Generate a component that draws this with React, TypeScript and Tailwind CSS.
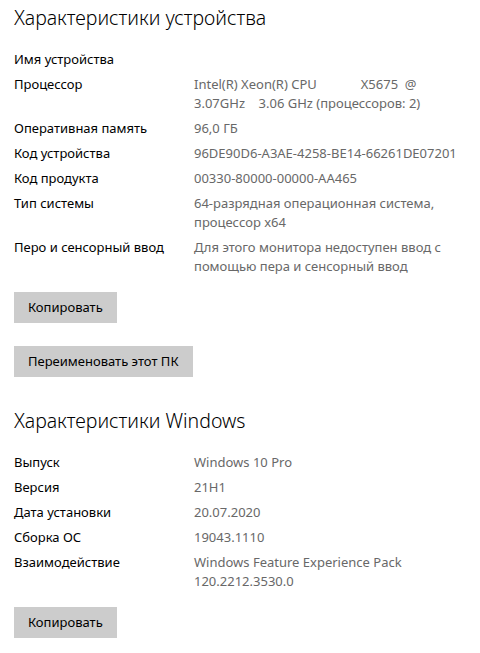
import type { ReactNode } from 'react';

// ============================================================================
// Data
// ============================================================================

type Row = { label: string; value?: ReactNode };

const deviceRows: Row[] = [
  { label: 'Имя устройства' },
  {
    label: 'Процессор',
    value: (
      <>
        <span className="whitespace-pre">Intel(R) Xeon(R) CPU             X5675  @</span>
        <br />
        <span className="whitespace-pre">3.07GHz    3.06 GHz (процессоров: 2)</span>
      </>
    ),
  },
  { label: 'Оперативная память', value: '96,0 ГБ' },
  { label: 'Код устройства', value: '96DE90D6-A3AE-4258-BE14-66261DE07201' },
  { label: 'Код продукта', value: '00330-80000-00000-AA465' },
  {
    label: 'Тип системы',
    value: (
      <>
        64-разрядная операционная система,
        <br />
        процессор x64
      </>
    ),
  },
  {
    label: 'Перо и сенсорный ввод',
    value: (
      <>
        Для этого монитора недоступен ввод с
        <br />
        помощью пера и сенсорный ввод
      </>
    ),
  },
];

const windowsRows: Row[] = [
  { label: 'Выпуск', value: 'Windows 10 Pro' },
  { label: 'Версия', value: '21H1' },
  { label: 'Дата установки', value: '20.07.2020' },
  { label: 'Сборка ОС', value: '19043.1110' },
  {
    label: 'Взаимодействие',
    value: (
      <>
        Windows Feature Experience Pack
        <br />
        120.2212.3530.0
      </>
    ),
  },
];

// ============================================================================
// Components
// ============================================================================

function SpecList({ rows }: { rows: Row[] }) {
  return (
    <div className="flex flex-col gap-[6px]">
      {rows.map((row) => (
        <div key={row.label} className="grid grid-cols-[180px_1fr] text-[13px] leading-[19px]">
          <div className="text-[#000000]">{row.label}</div>
          <div className="text-[#686868]">{row.value}</div>
        </div>
      ))}
    </div>
  );
}

function GrayButton({ children }: { children: ReactNode }) {
  return (
    <button className="h-[31px] self-start bg-[#cccccc] px-[14px] text-[13px] text-[#000000]">
      {children}
    </button>
  );
}

export default function App() {
  return (
    <div
      className="min-h-[653px] bg-white px-[14px] pt-[4px]"
      style={{ fontFamily: '"Noto Sans", "Open Sans", sans-serif' }}
    >
      {/* Device specs */}
      <h1 className="text-[19.5px] leading-[28px] font-light text-[#000000]">Характеристики устройства</h1>
      <div className="mt-[18px]">
        <SpecList rows={deviceRows} />
      </div>
      <div className="mt-[16px] flex flex-col gap-[23px]">
        <GrayButton>Копировать</GrayButton>
        <GrayButton>Переименовать этот ПК</GrayButton>
      </div>

      {/* Windows specs */}
      <h1 className="mt-[30px] text-[19.5px] leading-[28px] font-light text-[#000000]">Характеристики Windows</h1>
      <div className="mt-[18px]">
        <SpecList rows={windowsRows} />
      </div>
      <div className="mt-[16px] flex flex-col">
        <GrayButton>Копировать</GrayButton>
      </div>
    </div>
  );
}
